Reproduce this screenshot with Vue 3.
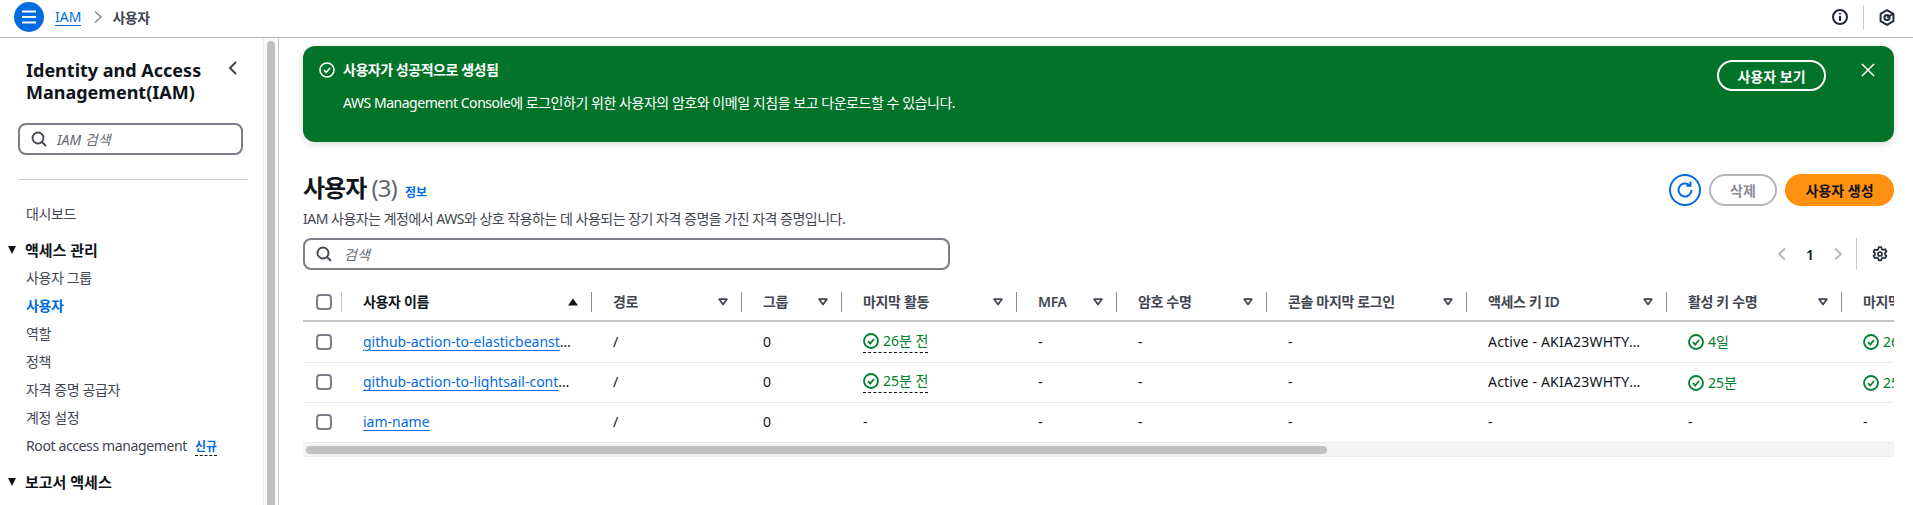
<template>
  <div class="page">
    <header class="topbar">
      <button class="menu-btn">
        <svg width="18" height="16" viewBox="0 0 18 16"><path d="M2 2.500h14M2 8h14M2 13.500h14" stroke="#fff" stroke-width="2" fill="none"/></svg>
      </button>
      <a class="crumb">IAM</a>
      <svg class="crumb-sep" width="10" height="14" viewBox="0 0 10 14"><path d="M2 1.500 8 7l-6 5.500" stroke="#8c8c94" stroke-width="1.600" fill="none"/></svg>
      <span class="crumb-now">사용자</span>
      <div class="top-actions">
        <svg width="16" height="16" viewBox="0 0 16 16"><circle cx="8" cy="8" r="7" stroke="#232b37" stroke-width="2" fill="none"/><path d="M8 7v5M8 4v1.600" stroke="#232b37" stroke-width="2" fill="none"/></svg>
        <span class="top-sep"></span>
        <svg width="16" height="17" viewBox="0 0 16 17"><path d="M8 1.200 14.400 4.800v7.400L8 15.800 1.600 12.200V4.800z" stroke="#232b37" stroke-width="2" fill="none" stroke-linejoin="round"/><circle cx="8" cy="8.500" r="2.600" stroke="#232b37" stroke-width="2" fill="none"/><path d="M8 8.500 14 5" stroke="#232b37" stroke-width="2"/></svg>
      </div>
    </header>

    <div class="body">
      <aside class="sidebar">
        <div class="side-content">
          <div class="side-head">
            <h2>Identity and Access Management(IAM)</h2>
            <svg class="collapse" width="10" height="16" viewBox="0 0 10 16"><path d="M8 2 2 8l6 6" stroke="#424650" stroke-width="2" fill="none"/></svg>
          </div>
          <div class="side-search">
            <svg width="16" height="16" viewBox="0 0 16 16"><circle cx="7" cy="7" r="5.500" stroke="#424650" stroke-width="1.800" fill="none"/><path d="m11 11 4 4" stroke="#424650" stroke-width="1.800"/></svg>
            <span>IAM 검색</span>
          </div>
          <hr class="side-divider" />
          <a class="nav-item">대시보드</a>
          <div class="nav-group"><i class="caret"></i>액세스 관리</div>
          <a v-for="item in accessNav" :key="item" class="nav-item" :class="{ active: item === '사용자' }">{{ item }}</a>
          <a class="nav-item">Root access management<span class="new-tag">신규</span></a>
          <div class="nav-group second"><i class="caret"></i>보고서 액세스</div>
        </div>
        <div class="side-rail"><div class="side-thumb"></div></div>
      </aside>

      <main class="main">
        <section class="flash">
          <svg class="flash-icon" width="16" height="16" viewBox="0 0 16 16"><circle cx="8" cy="8" r="7" stroke="#fff" stroke-width="1.600" fill="none"/><path d="m5 8 2.200 2.500L11 6" stroke="#fff" stroke-width="1.600" fill="none"/></svg>
          <div class="flash-text">
            <div class="flash-title">사용자가 성공적으로 생성됨</div>
            <div class="flash-body">AWS Management Console에 로그인하기 위한 사용자의 암호와 이메일 지침을 보고 다운로드할 수 있습니다.</div>
          </div>
          <button class="flash-btn">사용자 보기</button>
          <svg class="flash-close" width="14" height="14" viewBox="0 0 14 14"><path d="m1 1 12 12M13 1 1 13" stroke="#fff" stroke-width="1.500"/></svg>
        </section>

        <section class="head">
          <div>
            <h1>사용자 <span class="count">(3)</span> <a class="info">정보</a></h1>
            <p>IAM 사용자는 계정에서 AWS와 상호 작용하는 데 사용되는 장기 자격 증명을 가진 자격 증명입니다.</p>
          </div>
          <div class="head-actions">
            <button class="refresh">
              <svg width="20" height="20" viewBox="0 0 20 20"><path d="M16.500 10a6.500 6.500 0 1 1-2.200-4.900" stroke="#006ce0" stroke-width="2" fill="none"/><path d="M15.500 1.500v4.200h-4.200" stroke="#006ce0" stroke-width="2" fill="none"/></svg>
            </button>
            <button class="btn-disabled">삭제</button>
            <button class="btn-primary">사용자 생성</button>
          </div>
        </section>

        <div class="tools">
          <div class="table-search">
            <svg width="16" height="16" viewBox="0 0 16 16"><circle cx="7" cy="7" r="5.500" stroke="#424650" stroke-width="1.800" fill="none"/><path d="m11 11 4 4" stroke="#424650" stroke-width="1.800"/></svg>
            <span>검색</span>
          </div>
          <div class="pager">
            <svg width="10" height="14" viewBox="0 0 10 14"><path d="M8 1.500 2 7l6 5.500" stroke="#b4b4bb" stroke-width="1.800" fill="none"/></svg>
            <b>1</b>
            <svg width="10" height="14" viewBox="0 0 10 14"><path d="m2 1.500 6 5.500-6 5.500" stroke="#b4b4bb" stroke-width="1.800" fill="none"/></svg>
            <span class="pager-sep"></span>
            <svg width="16" height="16" viewBox="0 0 16 16"><path d="M6.700 1h2.600l.4 2 1.600.9 1.900-.7 1.300 2.300-1.500 1.300v1.800l1.500 1.300-1.300 2.300-1.900-.7-1.600.9-.4 2H6.700l-.4-2-1.600-.9-1.900.7-1.300-2.300 1.500-1.300V7.100L1.500 5.800l1.300-2.300 1.900.7 1.600-.9z" stroke="#232b37" stroke-width="1.700" fill="none" stroke-linejoin="round"/><circle cx="8" cy="8" r="2" stroke="#232b37" stroke-width="1.700" fill="none"/></svg>
          </div>
        </div>

        <div class="table-wrap">
          <table>
            <colgroup>
              <col v-for="w in colWidths" :key="w.id" :style="{ width: w.px + 'px' }" />
            </colgroup>
            <thead>
              <tr>
                <th class="check-cell"><span class="check"></span></th>
                <th v-for="col in columns" :key="col.label">
                  <div class="th-inner">
                    <span class="th-label">{{ col.label }}</span>
                    <svg v-if="col.label !== lastColumn" width="10" height="8" viewBox="0 0 10 8">
                      <path v-if="col.sorted" d="M5 .5 10 7.500H0z" fill="#0f141a" />
                      <path v-else d="M1.200 1.200h7.600L5 6.500z" stroke="#424650" stroke-width="1.800" fill="none" stroke-linejoin="round" />
                    </svg>
                  </div>
                </th>
              </tr>
            </thead>
            <tbody>
              <tr v-for="user in users" :key="user.name">
                <td class="check-cell"><span class="check"></span></td>
                <td class="cut"><a class="user-link">{{ user.name }}</a></td>
                <td>/</td>
                <td>0</td>
                <td><span v-if="user.activity" class="ok dashed"><svg width="16" height="16" viewBox="0 0 16 16"><circle cx="8" cy="8" r="7" stroke="#00802f" stroke-width="1.800" fill="none"/><path d="m5 8 2.200 2.500L11 6" stroke="#00802f" stroke-width="1.800" fill="none"/></svg>{{ user.activity }}</span><template v-else>-</template></td>
                <td>-</td>
                <td>-</td>
                <td>-</td>
                <td class="cut key-cell">{{ user.key || '-' }}</td>
                <td><span v-if="user.keyAge" class="ok"><svg width="16" height="16" viewBox="0 0 16 16"><circle cx="8" cy="8" r="7" stroke="#00802f" stroke-width="1.800" fill="none"/><path d="m5 8 2.200 2.500L11 6" stroke="#00802f" stroke-width="1.800" fill="none"/></svg>{{ user.keyAge }}</span><template v-else>-</template></td>
                <td><span v-if="user.keyUsed" class="ok"><svg width="16" height="16" viewBox="0 0 16 16"><circle cx="8" cy="8" r="7" stroke="#00802f" stroke-width="1.800" fill="none"/><path d="m5 8 2.200 2.500L11 6" stroke="#00802f" stroke-width="1.800" fill="none"/></svg>{{ user.keyUsed }}</span><template v-else>-</template></td>
              </tr>
            </tbody>
          </table>
        </div>
        <div class="table-rail"><div class="table-thumb"></div></div>
      </main>
    </div>
  </div>
</template>

<script setup>
const accessNav = ['사용자 그룹', '사용자', '역할', '정책', '자격 증명 공급자', '계정 설정']

const lastColumn = '마지막 사용된 액세스 키'

const columns = [
  { label: '사용자 이름', sorted: true },
  { label: '경로' },
  { label: '그룹' },
  { label: '마지막 활동' },
  { label: 'MFA' },
  { label: '암호 수명' },
  { label: '콘솔 마지막 로그인' },
  { label: '액세스 키 ID' },
  { label: '활성 키 수명' },
  { label: lastColumn }
]

const colWidths = [39, 250, 150, 100, 175, 100, 150, 200, 200, 175, 931].map((px, id) => ({ id, px }))

const users = [
  { name: 'github-action-to-elasticbeanstalk', activity: '26분 전', key: 'Active - AKIA23WHTYQ4LMZP8RXN', keyAge: '4일', keyUsed: '26분 전' },
  { name: 'github-action-to-lightsail-container', activity: '25분 전', key: 'Active - AKIA23WHTYK7DVNE2JSG', keyAge: '25분', keyUsed: '25분 전' },
  { name: 'iam-name' }
]
</script>

<style>
html,
body {
  margin: 0;
  overflow: hidden;
  background: #fff;
}
</style>

<style scoped>
.page {
  height: 505px;
  overflow: hidden;
  font-family: "Noto Sans", "Noto Sans CJK KR", sans-serif;
  font-size: 14px;
  color: #0f141a;
}

.topbar {
  height: 34px;
  display: flex;
  align-items: center;
  border-bottom: 1px solid #b4b4bb;
  padding: 0 18px 3px 14px;
}

.menu-btn {
  width: 30px;
  height: 30px;
  border: 0;
  border-radius: 50%;
  background: #006ce0;
  padding: 0;
  display: flex;
  align-items: center;
  justify-content: center;
  margin-right: 11px;
}

.crumb {
  color: #006ce0;
  border-bottom: 1px solid #006ce0;
  line-height: 17px;
}

.crumb-sep {
  margin: 0 9px 0 12px;
}

.crumb-now {
  color: #424650;
  font-weight: 600;
  letter-spacing: -0.4px;
}

.top-actions {
  margin-left: auto;
  display: flex;
  align-items: center;
  gap: 15px;
}

.top-sep {
  width: 1px;
  height: 25px;
  background: #c6c6cd;
}

.body {
  display: flex;
}

.sidebar {
  width: 278px;
  height: 467px;
  flex: none;
  overflow: hidden;
  display: flex;
  border-right: 1px solid #c6c6cd;
}

.side-content {
  width: 263px;
  flex: none;
  padding-top: 21px;
}

.side-rail {
  width: 15px;
  flex: none;
  box-sizing: border-box;
  background: #fafafa;
  border-left: 1px solid #e8e8e8;
  padding: 3px 3px 0 3px;
}

.side-thumb {
  height: 600px;
  border-radius: 4px;
  background: #c1c1c1;
}

.side-head {
  display: flex;
  align-items: flex-start;
  padding: 0 20px 0 26px;
}

.side-head h2 {
  margin: 0;
  width: 196px;
  font-size: 18px;
  line-height: 22px;
  font-weight: 700;
  flex: none;
}

.collapse {
  margin-left: 6px;
  margin-top: 1px;
}

.side-search {
  width: 225px;
  height: 32px;
  margin: 20px 0 0 18px;
  border: 2px solid #7d7d87;
  border-radius: 8px;
  box-sizing: border-box;
  display: flex;
  align-items: center;
  gap: 10px;
  padding-left: 11px;
}

.side-search span,
.table-search span {
  font-style: italic;
  color: #656871;
}

.side-divider {
  width: 229px;
  margin: 24px 0 20px 18px;
  border: 0;
  border-top: 1px solid #c6c6cd;
}

.nav-item {
  display: block;
  height: 28px;
  line-height: 28px;
  padding-left: 26px;
  color: #424650;
  white-space: nowrap;
  letter-spacing: -0.38px;
}

.nav-item.active {
  color: #006ce0;
  font-weight: 700;
}

.new-tag {
  color: #006ce0;
  font-size: 12px;
  font-weight: 600;
  margin-left: 8px;
  border-bottom: 1px dashed #0f141a;
  letter-spacing: 0;
}

.nav-group {
  height: 28px;
  line-height: 28px;
  margin-top: 8px;
  padding-left: 8px;
  font-size: 15px;
  font-weight: 700;
  display: flex;
  align-items: center;
  gap: 9px;
}

.caret {
  width: 0;
  height: 0;
  border-left: 4.500px solid transparent;
  border-right: 4.500px solid transparent;
  border-top: 8px solid #0f141a;
}

.main {
  flex: 1;
  min-width: 0;
  padding: 8px 19px 0 24px;
}

.flash {
  height: 96px;
  box-sizing: border-box;
  background: #04732a;
  border-radius: 12px;
  box-shadow: 0 2px 8px rgba(0, 0, 0, 0.15);
  color: #fff;
  display: flex;
  align-items: flex-start;
  padding: 14px 19px 0 16px;
}

.flash-icon {
  margin-top: 2px;
  margin-right: 8px;
}

.flash-text {
  flex: 1;
  letter-spacing: -0.46px;
}

.flash-title {
  font-weight: 600;
  height: 20px;
  line-height: 20px;
}

.flash-body {
  margin-top: 13px;
  height: 20px;
  line-height: 20px;
}

.flash-btn {
  width: 109px;
  height: 31px;
  margin-right: 35px;
  background: transparent;
  color: #fff;
  border: 2px solid #fff;
  border-radius: 16px;
  font: inherit;
  font-weight: 600;
  padding: 0;
}

.flash-close {
  margin-top: 3px;
}

.head {
  display: flex;
  justify-content: space-between;
  margin-top: 28px;
}

.head h1 {
  margin: 0;
  height: 39px;
  font-size: 24px;
  line-height: 36px;
  font-weight: 600;
  letter-spacing: -1px;
}

.count {
  color: #656871;
  font-weight: 400;
}

.info {
  color: #006ce0;
  font-size: 12px;
  font-weight: 600;
  letter-spacing: 0;
  margin-left: 3px;
}

.head p {
  margin: 0;
  height: 20px;
  line-height: 20px;
  color: #424650;
  letter-spacing: -0.5px;
}

.head-actions {
  display: flex;
  gap: 8px;
  margin-top: 4px;
}

.head-actions button {
  height: 32px;
  border-radius: 16px;
  font: inherit;
  font-weight: 600;
  padding: 0;
  box-sizing: border-box;
}

.head-actions .refresh {
  width: 32px;
  background: #fff;
  border: 2px solid #006ce0;
  display: flex;
  align-items: center;
  justify-content: center;
}

.head-actions .btn-disabled {
  width: 68px;
  background: #fff;
  border: 2px solid #b4b4bb;
  color: #8c8c94;
}

.head-actions .btn-primary {
  width: 109px;
  background: #ff9010;
  border: 0;
  color: #0f141a;
}

.tools {
  display: flex;
  justify-content: space-between;
  margin-top: 9px;
}

.table-search {
  width: 647px;
  height: 32px;
  box-sizing: border-box;
  border: 2px solid #7d7d87;
  border-radius: 8px;
  display: flex;
  align-items: center;
  gap: 12px;
  padding-left: 11px;
}

.pager {
  display: flex;
  align-items: center;
  padding-right: 6px;
}

.pager b {
  width: 46px;
  text-align: center;
  font-weight: 600;
}

.pager-sep {
  width: 1px;
  height: 32px;
  background: #c6c6cd;
  margin: 0 15px 0 13px;
}

.table-wrap {
  margin-top: 13px;
  overflow: hidden;
}

.table-rail {
  height: 14px;
  box-sizing: border-box;
  padding: 3px;
  background: #f4f4f4;
  border-bottom: 1px solid #ebebf0;
}

.table-thumb {
  width: 1021px;
  height: 8px;
  border-radius: 4px;
  background: #c1c1c1;
}

table {
  width: 2470px;
  table-layout: fixed;
  border-collapse: collapse;
}

th {
  position: relative;
  height: 38px;
  box-sizing: border-box;
  padding: 0 14px 0 21px;
  text-align: left;
  font-weight: 600;
  color: #424650;
  border-bottom: 2px solid #c6c6cd;
  letter-spacing: -0.35px;
}

th::after {
  content: "";
  position: absolute;
  right: 0;
  top: 9px;
  width: 1px;
  height: 20px;
  background: #8c8c94;
}

th:first-child::after {
  background: #c6c6cd;
}

th:nth-child(2) {
  color: #0f141a;
}

.th-inner {
  height: 20px;
  display: flex;
  align-items: center;
  justify-content: space-between;
}

.th-label {
  line-height: 20px;
  height: 20px;
  white-space: nowrap;
}

td {
  height: 40px;
  padding: 0 22px 0 21px;
  box-sizing: border-box;
  border-bottom: 1px solid #e8e8ed;
  white-space: nowrap;
  line-height: 20px;
}

tbody tr:first-child td {
  height: 41px;
}

.check-cell {
  padding: 0 0 0 13px;
}

.check {
  display: block;
  width: 16px;
  height: 16px;
  box-sizing: border-box;
  border: 2px solid #7d7d87;
  border-radius: 4px;
}

td.cut {
  overflow: hidden;
  text-overflow: ellipsis;
  padding-right: 16px;
}

td.key-cell {
  padding-right: 20px;
  letter-spacing: 0.2px;
}

.user-link {
  color: #006ce0;
  text-decoration: underline;
  text-underline-offset: 3px;
}

.ok {
  display: inline-flex;
  align-items: center;
  gap: 4px;
  color: #00802f;
  line-height: 20px;
  vertical-align: middle;
}

.dashed {
  border-bottom: 1px dashed #0f141a;
  padding-bottom: 1px;
}
</style>
